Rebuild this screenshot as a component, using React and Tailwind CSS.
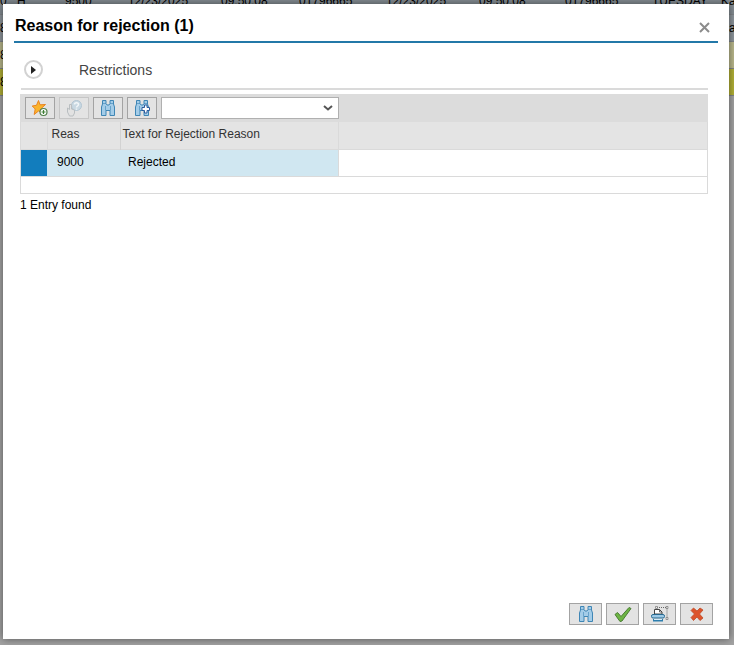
import { useState } from "react";

const gridRows = [
  {
    color: "bg-[#858d93]",
    cells: ["0", "H", "9500", "12/23/2025", "09:50:08", "01796665", "12/23/2025", "09:50:08", "01796665", "TUESDAY", "Ka"],
  },
  { color: "bg-[#8d959b]", cells: ["8", "", "", "", "", "", "", "", "", "", "Ka"] },
  { color: "bg-[#bab88c]", cells: ["8", "", "", "", "", "", "", "", "", "", ""] },
  { color: "bg-[#b3b136]", cells: ["8", "", "", "", "", "", "", "", "", "", ""] },
];

const reasons = [{ code: "9000", text: "Rejected" }];

function Binoculars({ plus }) {
  return (
    <svg viewBox="0 0 16 18" className="h-[18px] w-4" aria-hidden="true">
      <path
        d="M2.500 1.500h3.500v3l1 1.500h2l1-1.500v-3h3.500v3.500l1 3v8.500h-4.500v-5h-4v5h-4.500v-8.500l1-3z"
        fill="#a3cce8"
        stroke="#3f86b5"
        strokeWidth="1"
        strokeLinejoin="round"
      />
      <path
        d="M2.500 4.500h3.500M10 4.500h3.500M5.500 7v4.500M10.500 7v4.500"
        fill="none"
        stroke="#3f86b5"
        strokeOpacity=".6"
      />
      {plus && (
        <path
          d="M10.500 6h2.500v2.500h2.500v3h-2.500v2.500h-2.500v-2.500h-2.500v-3h2.500z"
          fill="#fff"
          stroke="#2a5b9c"
          strokeWidth="1"
        />
      )}
    </svg>
  );
}

function StarAdd() {
  return (
    <svg viewBox="0 0 18 18" className="h-[18px] w-[18px]" aria-hidden="true">
      <path
        d="M7.500 1.500l1.500 4.300 5.500-.3-4 3.700 1.500 5-4.500-2.200-4.300 3.500 1-5.500-3-3 4.300-.7z"
        fill="#fbb42c"
        stroke="#e88422"
        strokeLinejoin="round"
      />
      <circle cx="12.500" cy="13" r="3.500" fill="#fff" stroke="#4f7f4a" strokeWidth="1.200" />
      <path d="M12.500 11v4M10.500 13h4" stroke="#3f7f35" strokeWidth="1.200" />
    </svg>
  );
}

function HandHelp() {
  return (
    <svg viewBox="0 0 18 18" className="h-[18px] w-[18px]" fill="none" aria-hidden="true">
      <circle cx="11.500" cy="6.500" r="5" fill="#c9d8e2" stroke="#b3c6d3" />
      <path d="M9.500 5.500c0-2.500 4-2.500 4 0 0 1.500-2 1.500-2 3M11.500 9.500v1.200" stroke="#f2f6f8" strokeWidth="1.500" />
      <path d="M2.500 9l2 1.500v-5h2v4.500l3 1v3l-1.500 3h-3.500l-2-4z" fill="#e2e2e2" stroke="#b9bec1" />
    </svg>
  );
}

function PrintFrame() {
  return (
    <svg viewBox="0 0 18 18" className="h-[18px] w-[18px]" fill="none" aria-hidden="true">
      <path d="M6 2.500h10v11" stroke="#666" strokeDasharray="1 1" />
      <path d="M4.500 1.500h2v2h-2zM15 1.500h2v2h-2zM15 12.500h2v2h-2z" fill="#eee" stroke="#777" strokeWidth=".7" />
      <path d="M3.500 9v-4.500h5l2.500 2.500v2z" fill="#fff" stroke="#444" />
      <path d="M8.500 4.500v2.500h2.500" stroke="#444" strokeWidth=".8" />
      <rect x=".5" y="9.500" width="13" height="3.500" rx="1.500" fill="#9cc9e6" stroke="#27698f" />
      <path d="M2 14h10v2.500h-10z" fill="#2d7eae" />
      <path d="M3 14.500h8" stroke="#d9ecf7" />
    </svg>
  );
}

function Check() {
  return (
    <svg viewBox="0 0 18 18" className="h-[18px] w-[18px]" aria-hidden="true">
      <path
        d="M1 9.500l2.500-2 3.500 4 8-9 2 1-9 12.500-2 .5z"
        fill="#6db544"
        stroke="#4a7d33"
        strokeLinejoin="round"
      />
    </svg>
  );
}

function Cross() {
  return (
    <svg viewBox="0 0 16 16" className="h-4 w-4" aria-hidden="true">
      <path
        d="M4.500 2l3.500 3 3-3 3 2-3.500 4 3.500 4-3 2.500-3-3.500-3.500 3.500-2.500-3 3.500-3.500-3.500-3.500z"
        fill="#dd532b"
        stroke="#bf4a26"
        strokeWidth=".8"
        strokeLinejoin="round"
      />
    </svg>
  );
}

function ToolButton({ label, wide, disabled, onClick, children }) {
  return (
    <button
      type="button"
      aria-label={label}
      disabled={disabled}
      onClick={onClick}
      className={`flex h-[22px] items-center justify-center border bg-[#e3e3e3] ${
        wide ? "w-[33px]" : "w-[30px]"
      } ${disabled ? "border-[#c6c6c6]" : "border-[#a3a3a3]"}`}
    >
      {children}
    </button>
  );
}

function BackgroundGrid() {
  return (
    <div className="absolute inset-0 overflow-hidden bg-[#a3a3a3]" aria-hidden="true">
      <div className="-mt-3">
        {gridRows.map((row, i) => (
          <div
            key={i}
            className={`grid h-[27px] grid-cols-[17px_48px_63px_93px_78px_87px_93px_86px_87px_69px_1fr] items-center border-b border-[#808488] text-xs whitespace-nowrap text-black ${row.color}`}
          >
            {row.cells.map((cell, j) => (
              <span key={j}>{cell}</span>
            ))}
          </div>
        ))}
      </div>
    </div>
  );
}

export default function App() {
  const [isOpen, setIsOpen] = useState(true);
  const [filter, setFilter] = useState("");

  const handleClose = () => setIsOpen(false);

  return (
    <div className="relative flex min-h-screen flex-col font-['Liberation_Sans',Arial,sans-serif]">
      <BackgroundGrid />

      {isOpen && (
        <div
          role="dialog"
          aria-labelledby="dialog-title"
          className="relative mt-1 mr-[5px] mb-1.5 ml-[3px] flex flex-1 flex-col bg-white shadow-[0_0_8px_rgba(0,0,0,0.5)]"
        >
          {/* Header */}
          <div className="mx-[11px] flex h-[39px] items-center justify-between border-b-2 border-[#2378a8] pt-1.5 pr-2">
            <h1 id="dialog-title" className="pl-px text-base font-bold text-black">
              Reason for rejection (1)
            </h1>
            <button type="button" aria-label="Close" onClick={handleClose} className="pt-1">
              <svg viewBox="0 0 11 11" className="h-[11px] w-[11px]" aria-hidden="true">
                <path d="M1 1l9 9M10 1l-9 9" stroke="#8c8c8c" strokeWidth="2" />
              </svg>
            </button>
          </div>

          <div className="mr-[21px] ml-[17px] flex-1">
            {/* Restrictions */}
            <div className="ml-px flex h-[47px] items-center border-b-2 border-[#dadada] pt-2 pl-[3px]">
              <button
                type="button"
                aria-label="Expand restrictions"
                className="flex h-[19px] w-[19px] items-center justify-center rounded-full border-2 border-[#d2d2d2]"
              >
                <svg viewBox="0 0 5 8" className="h-2 w-[5px]" aria-hidden="true">
                  <path d="M0 0l5 4-5 4z" fill="#222" />
                </svg>
              </button>
              <span className="ml-9 text-sm text-[#444]">Restrictions</span>
            </div>

            {/* Toolbar */}
            <div className="mt-1 flex h-7 items-center gap-1 bg-[#dcdcdc] pl-[5px]">
              <ToolButton label="Add to favorites">
                <StarAdd />
              </ToolButton>
              <ToolButton label="Help" disabled>
                <HandHelp />
              </ToolButton>
              <ToolButton label="Find">
                <Binoculars />
              </ToolButton>
              <ToolButton label="Find next">
                <Binoculars plus />
              </ToolButton>
              <div className="relative">
                <select
                  aria-label="Filter"
                  value={filter}
                  onChange={(e) => setFilter(e.target.value)}
                  className="block h-[22px] w-[178px] appearance-none border border-[#b0b0b0] bg-white px-1 text-xs"
                >
                  <option value=""></option>
                </select>
                <svg
                  viewBox="0 0 10 6"
                  className="pointer-events-none absolute top-2 right-1.5 h-1.5 w-2.5"
                  fill="none"
                  aria-hidden="true"
                >
                  <path d="M1 1l4 3.500 4-3.500" stroke="#555" strokeWidth="2" />
                </svg>
              </div>
            </div>

            {/* Hit list */}
            <div className="border border-t-0 border-[#dadada] pb-4">
              <table className="w-full table-fixed border-collapse text-left text-xs">
                <colgroup>
                  <col className="w-[26px]" />
                  <col className="w-[73px]" />
                  <col className="w-[218px]" />
                  <col />
                </colgroup>
                <thead>
                  <tr className="h-[27px] border-b border-[#dadada] bg-[#e4e4e4] text-[#333]">
                    <td className="border-r border-[#dadada]" />
                    <th className="border-r border-[#d2d2d2] pb-0.5 pl-1 font-normal">Reas</th>
                    <th className="border-r border-[#dadada] pb-0.5 pl-0.5 font-normal">
                      Text for Rejection Reason
                    </th>
                    <td />
                  </tr>
                </thead>
                <tbody>
                  {reasons.map((reason) => (
                    <tr key={reason.code} className="h-[27px] border-b border-[#dadada] text-black">
                      <td className="bg-[#127dbd]" />
                      <td className="bg-[#d0e7f1] pb-0.5 pl-2.5">{reason.code}</td>
                      <td className="border-r border-[#dadada] bg-[#d0e7f1] pb-0.5 pl-2">
                        {reason.text}
                      </td>
                      <td />
                    </tr>
                  ))}
                </tbody>
              </table>
            </div>
            <p className="pt-[3px] text-xs text-black">{reasons.length} Entry found</p>
          </div>

          {/* Footer */}
          <div className="flex justify-end gap-1 pr-4 pb-3.5">
            <ToolButton label="Find" wide>
              <Binoculars />
            </ToolButton>
            <ToolButton label="Accept" wide onClick={handleClose}>
              <Check />
            </ToolButton>
            <ToolButton label="Print" wide>
              <PrintFrame />
            </ToolButton>
            <ToolButton label="Cancel" wide onClick={handleClose}>
              <Cross />
            </ToolButton>
          </div>
        </div>
      )}
    </div>
  );
}
